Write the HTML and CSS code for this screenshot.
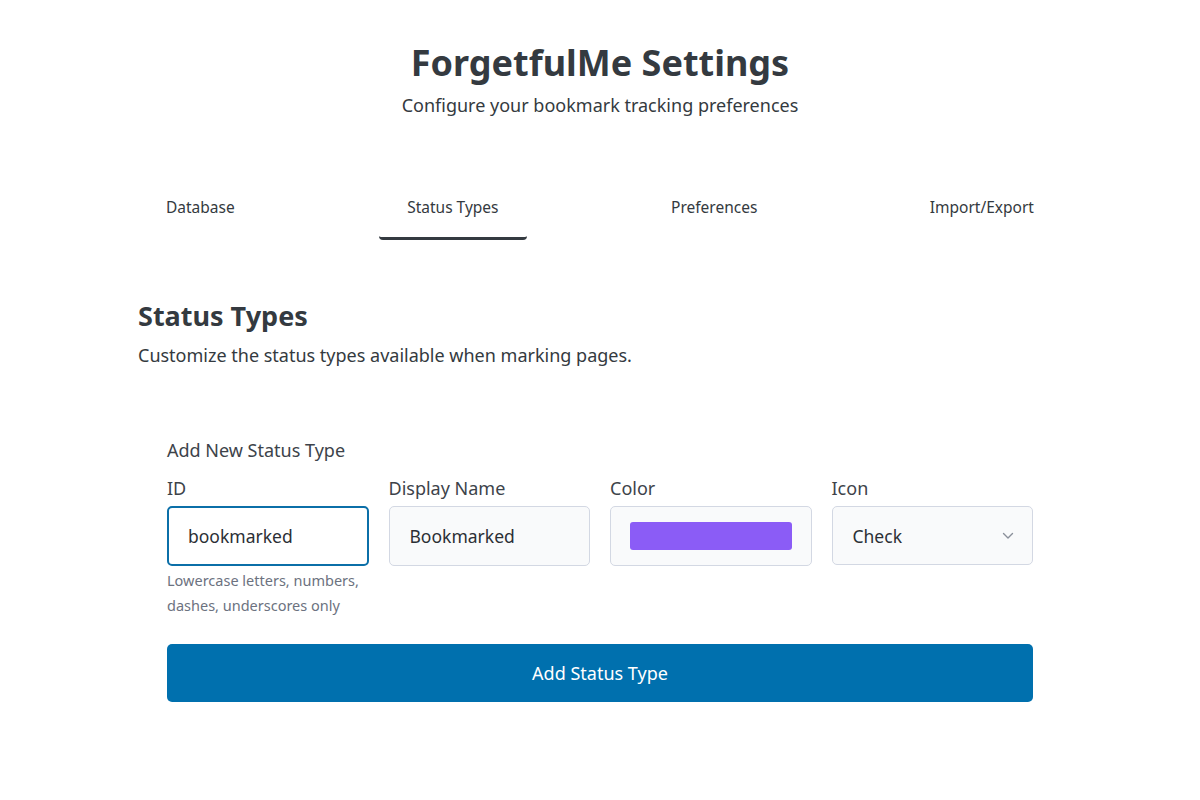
FILE: index.html
```html
<!DOCTYPE html>
<html lang="en">
<head>
<meta charset="utf-8">
<title>ForgetfulMe Settings</title>
<link rel="stylesheet" href="styles.css">
</head>
<body>
<div class="page">
  <header class="header">
    <h1 class="title">ForgetfulMe Settings</h1>
    <p class="subtitle">Configure your bookmark tracking preferences</p>
  </header>

  <nav class="tabs">
    <button class="tab">Database</button>
    <button class="tab tab-active">Status Types</button>
    <button class="tab">Preferences</button>
    <button class="tab">Import/Export</button>
  </nav>

  <section class="section">
    <h2 class="section-title">Status Types</h2>
    <p class="section-desc">Customize the status types available when marking pages.</p>

    <div class="card">
      <div class="card-title">Add New Status Type</div>
      <div class="fields">
        <div class="field">
          <label class="label">ID</label>
          <div class="input input-focus">bookmarked</div>
          <div class="hint">Lowercase letters, numbers, dashes, underscores only</div>
        </div>
        <div class="field">
          <label class="label">Display Name</label>
          <div class="input">Bookmarked</div>
        </div>
        <div class="field">
          <label class="label">Color</label>
          <div class="input input-color"><span class="swatch"></span></div>
        </div>
        <div class="field">
          <label class="label">Icon</label>
          <div class="input input-select">
            <span>Check</span>
            <svg class="chevron" width="12" height="8" viewBox="0 0 12 8"><path d="M1.5 1.5 L6 6 L10.5 1.5" fill="none" stroke="#8a909a" stroke-width="1.4" stroke-linecap="round" stroke-linejoin="round"/></svg>
          </div>
        </div>
      </div>
      <button class="btn-primary">Add Status Type</button>
    </div>
  </section>
</div>
</body>
</html>
```

FILE: styles.css
```css
* { box-sizing: border-box; }
html, body { margin: 0; padding: 0; background: #ffffff; }
body {
  font-family: "Noto Sans", "Open Sans", "DejaVu Sans", sans-serif;
  color: #343a40;
}
.page {
  max-width: 924px;
  margin: 0 auto;
  padding-top: 39px;
}
.header { text-align: center; }
.title {
  margin: 0;
  font-size: 36px;
  line-height: 48px;
  font-weight: 700;
  color: #343a40;
}
.subtitle {
  margin: 6px 0 0;
  font-size: 18px;
  line-height: 24px;
  color: #343a40;
}
.tabs {
  display: flex;
  justify-content: space-between;
  margin-top: 68px;
}
.tab {
  font-family: inherit;
  font-size: 15.5px;
  line-height: 24px;
  color: #343a40;
  background: none;
  border: none;
  border-bottom: 3px solid transparent;
  border-radius: 0 0 4px 4px;
  padding: 10px 28px 18px;
  cursor: pointer;
}
.tab-active { border-bottom-color: #343a40; }
.section { margin-top: 58px; }
.section-title {
  margin: 0;
  font-size: 27px;
  line-height: 36px;
  font-weight: 700;
  color: #343a40;
}
.section-desc {
  margin: 9px 0 0;
  font-size: 18px;
  line-height: 24px;
}
.card {
  margin-top: 71px;
  padding: 0 29px;
}
.card-title {
  font-size: 18px;
  line-height: 24px;
  color: #3d434a;
}
.fields {
  display: grid;
  grid-template-columns: repeat(4, 1fr);
  gap: 20px;
  margin-top: 14px;
}
.field { display: flex; flex-direction: column; }
.label {
  font-size: 18px;
  line-height: 24px;
  color: #3d434a;
  margin-bottom: 6px;
}
.input {
  height: 60px;
  border: 1px solid #d3d8e3;
  border-radius: 5px;
  background: #f9fafb;
  padding: 0 20px;
  display: flex;
  align-items: center;
  font-size: 17.5px;
  color: #2b2f35;
}
.input-focus {
  border: 2px solid #0b6fa8;
  background: #ffffff;
  padding: 0 19px;
}
.input-color { padding: 0 19px; }
.swatch {
  display: block;
  width: 100%;
  height: 28px;
  background: #8b5cf6;
  border-radius: 3px;
}
.input-select {
  height: 59px;
  justify-content: space-between;
  padding-right: 18px;
}
.chevron { display: block; }
.hint {
  margin-top: 2px;
  font-size: 14.5px;
  line-height: 25px;
  color: #6c7280;
}
.btn-primary {
  display: block;
  width: 100%;
  margin-top: 26px;
  height: 58px;
  border: none;
  border-radius: 5px;
  background: #0070ae;
  color: #ffffff;
  font-family: inherit;
  font-size: 18px;
  cursor: pointer;
}
```
